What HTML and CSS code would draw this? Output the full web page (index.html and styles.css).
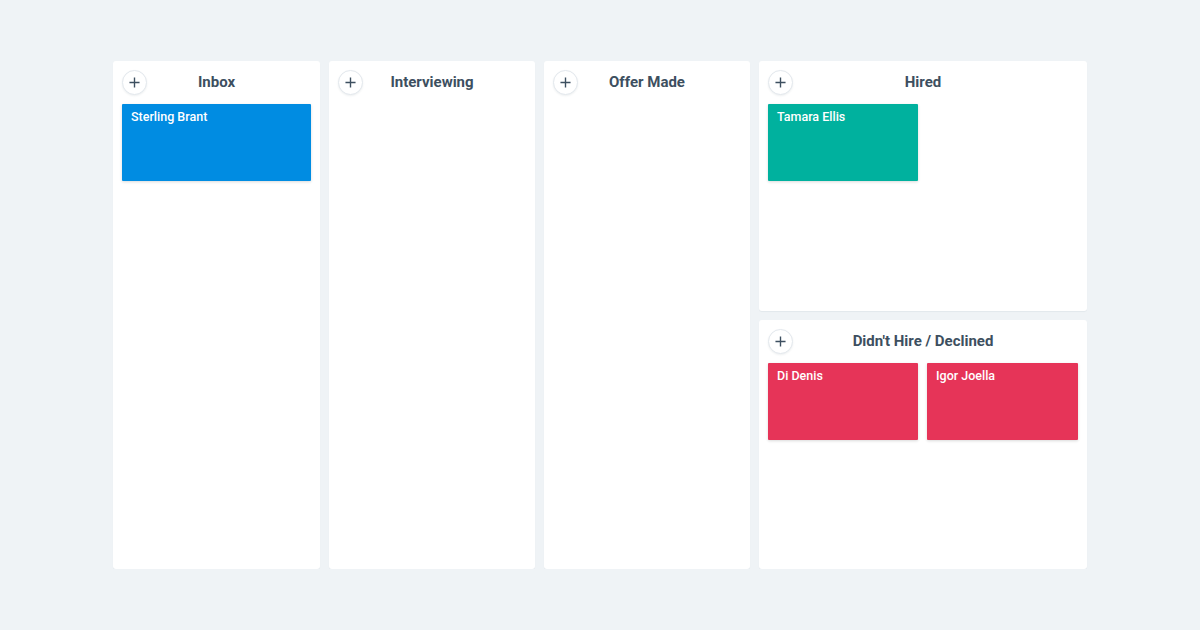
FILE: index.html
```html
<!DOCTYPE html>
<html lang="en">
<head>
    <meta charset="UTF-8">
    <title>Hiring Board</title>
    <link rel="stylesheet" href="styles.css">
</head>
<body>
    <div class="board">
        <div class="column">
            <div class="column-header">
                <button class="add-btn"><svg viewBox="0 0 12 12"><path d="M6 0.5v11M0.5 6h11"/></svg></button>
                <h2>Inbox</h2>
            </div>
            <div class="cards">
                <div class="card blue">Sterling Brant</div>
            </div>
        </div>

        <div class="column">
            <div class="column-header">
                <button class="add-btn"><svg viewBox="0 0 12 12"><path d="M6 0.5v11M0.5 6h11"/></svg></button>
                <h2>Interviewing</h2>
            </div>
            <div class="cards"></div>
        </div>

        <div class="column">
            <div class="column-header">
                <button class="add-btn"><svg viewBox="0 0 12 12"><path d="M6 0.5v11M0.5 6h11"/></svg></button>
                <h2>Offer Made</h2>
            </div>
            <div class="cards"></div>
        </div>

        <div class="stack">
            <div class="column">
                <div class="column-header">
                    <button class="add-btn"><svg viewBox="0 0 12 12"><path d="M6 0.5v11M0.5 6h11"/></svg></button>
                    <h2>Hired</h2>
                </div>
                <div class="cards two-up">
                    <div class="card teal">Tamara Ellis</div>
                </div>
            </div>
            <div class="column">
                <div class="column-header">
                    <button class="add-btn"><svg viewBox="0 0 12 12"><path d="M6 0.5v11M0.5 6h11"/></svg></button>
                    <h2>Didn't Hire / Declined</h2>
                </div>
                <div class="cards two-up">
                    <div class="card red">Di Denis</div>
                    <div class="card red">Igor Joella</div>
                </div>
            </div>
        </div>
    </div>
</body>
</html>
```

FILE: styles.css
```css
/* Page */
body {
    margin: 0;
    background-color: #eff3f6;
    font-family: Roboto, "Liberation Sans", sans-serif;
    color: #3d4f60;
}

.board {
    display: grid;
    grid-template-columns: 207px 206px 206px 327px;
    gap: 9px;
    height: 508px;
    padding: 61px 0 0 113px;
}

.stack {
    display: grid;
    grid-template-rows: 250px 249px;
    gap: 9px;
}

/* Columns */
.column {
    background: #ffffff;
    border-radius: 3px;
    box-shadow: 0 1px 1px rgba(40, 60, 80, 0.06);
    padding: 9px;
    box-sizing: border-box;
    display: flex;
    flex-direction: column;
    gap: 10px;
}

.column-header {
    position: relative;
    height: 24px;
    display: flex;
    align-items: center;
    justify-content: center;
}

.column-header h2 {
    margin: 0;
    font-size: 15px;
    font-weight: 700;
    color: #3d4f60;
}

.add-btn {
    position: absolute;
    left: 0;
    top: 0;
    width: 25px;
    height: 25px;
    padding: 0;
    border: 1px solid #e3e8ed;
    border-radius: 50%;
    background: #ffffff;
    box-shadow: 0 1px 2px rgba(40, 60, 80, 0.08);
    display: flex;
    align-items: center;
    justify-content: center;
    cursor: pointer;
}

.add-btn svg {
    width: 11px;
    height: 11px;
    fill: none;
    stroke: #3d4f60;
    stroke-width: 1.5;
}

/* Cards */
.cards {
    display: grid;
    grid-template-columns: 1fr;
    gap: 9px;
}

.cards.two-up {
    grid-template-columns: 150px 151px;
}

.card {
    height: 77px;
    box-sizing: border-box;
    padding: 5px 9px;
    color: #ffffff;
    font-size: 12.5px;
    font-weight: 500;
    border-radius: 1px;
    box-shadow: 0 1px 3px rgba(0, 0, 0, 0.15);
}

.card.blue { background-color: #008ce2; }
.card.teal { background-color: #00b19e; }
.card.red { background-color: #e63458; }
```
